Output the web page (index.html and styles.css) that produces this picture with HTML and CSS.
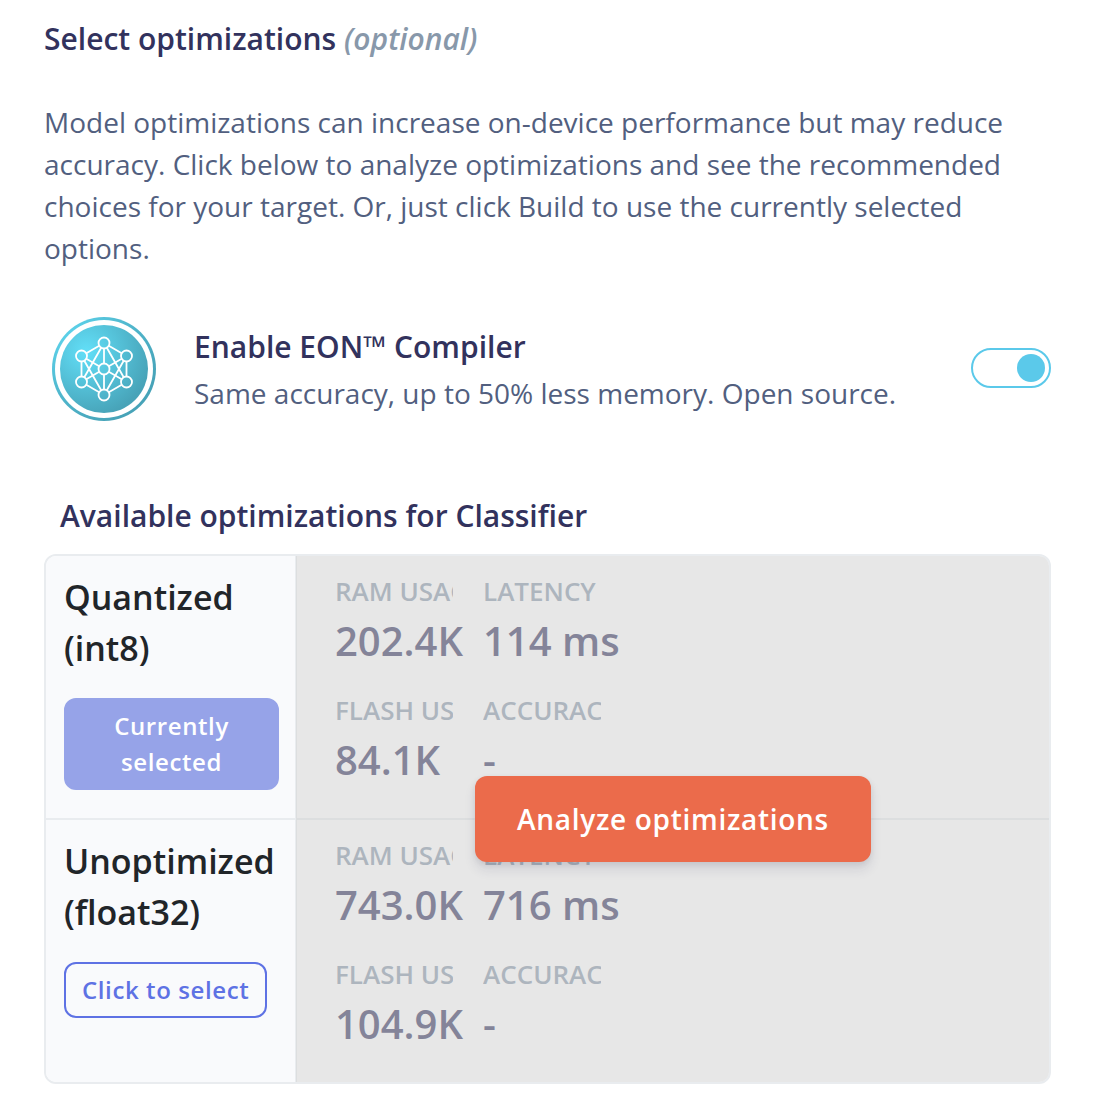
FILE: index.html
```html
<!DOCTYPE html>
<html lang="en">
<head>
<meta charset="utf-8">
<title>Select optimizations</title>
<link rel="stylesheet" href="styles.css">
</head>
<body>
<main class="page">
  <h2 class="title">Select optimizations <em class="optional">(optional)</em></h2>
  <p class="intro">Model optimizations can increase on-device performance but may reduce accuracy. Click below to analyze optimizations and see the recommended choices for your target. Or, just click Build to use the currently selected options.</p>

  <section class="compiler">
    <svg class="compiler-icon" viewBox="0 0 104 104" aria-hidden="true">
      <defs>
        <radialGradient id="disc" cx="0.3" cy="0.3" r="0.75">
          <stop offset="0" stop-color="#62dff8"/>
          <stop offset="1" stop-color="#47a3b8"/>
        </radialGradient>
      </defs>
      <circle cx="52" cy="52" r="52" fill="url(#disc)"/>
      <circle cx="52" cy="52" r="49" fill="#fff"/>
      <circle cx="52" cy="52" r="44" fill="url(#disc)"/>
      <g fill="none" stroke="#fff" stroke-width="1.8">
        <path d="M47.2 28.7 34.3 36.2M56.8 28.7 69.7 36.2M47.2 75.3 34.3 67.8M56.8 75.3 69.7 67.8M29.5 44.5v15M74.5 44.5v15"/>
        <path d="M52 31.5v15M52 57.500v15M34.300 41.700 47.200 49.200M56.800 54.800 69.700 62.300M69.700 41.700 56.800 49.200M47.200 54.800 34.300 62.300"/>
        <path d="M49.200 30.800 32.300 60.200M54.800 30.800 71.700 60.200M49.200 73.200 32.300 43.800M54.800 73.200 71.700 43.800"/>
        <circle cx="52" cy="26" r="5.500"/>
        <circle cx="29.500" cy="39" r="5.500"/>
        <circle cx="74.500" cy="39" r="5.500"/>
        <circle cx="52" cy="52" r="5.500"/>
        <circle cx="29.500" cy="65" r="5.500"/>
        <circle cx="74.500" cy="65" r="5.500"/>
        <circle cx="52" cy="78" r="5.500"/>
      </g>
    </svg>
    <div class="compiler-text">
      <h3 class="compiler-name">Enable EON™ Compiler</h3>
      <p class="compiler-desc">Same accuracy, up to 50% less memory. Open source.</p>
    </div>
    <span class="toggle" role="switch" aria-checked="true"><span class="knob"></span></span>
  </section>

  <h3 class="table-title">Available optimizations for Classifier</h3>
  <section class="table">
    <div class="row">
      <div class="variant">
        <h4 class="variant-name">Quantized (int8)</h4>
        <button class="btn btn-selected">Currently selected</button>
      </div>
      <div class="metrics">
        <div class="metric"><div class="label">RAM USAGE</div><div class="value">202.4K</div></div>
        <div class="metric"><div class="label">LATENCY</div><div class="value">114 ms</div></div>
        <div class="metric"><div class="label">FLASH USAGE</div><div class="value">84.1K</div></div>
        <div class="metric"><div class="label">ACCURACY</div><div class="value">-</div></div>
      </div>
    </div>
    <div class="row">
      <div class="variant">
        <h4 class="variant-name">Unoptimized (float32)</h4>
        <button class="btn btn-outline">Click to select</button>
      </div>
      <div class="metrics">
        <div class="metric"><div class="label">RAM USAGE</div><div class="value">743.0K</div></div>
        <div class="metric"><div class="label">LATENCY</div><div class="value">716 ms</div></div>
        <div class="metric"><div class="label">FLASH USAGE</div><div class="value">104.9K</div></div>
        <div class="metric"><div class="label">ACCURACY</div><div class="value">-</div></div>
      </div>
    </div>
    <div class="overlay"><button class="analyze">Analyze optimizations</button></div>
  </section>
</main>
</body>
</html>
```
FILE: styles.css
```css
* { box-sizing: border-box; }

body {
  margin: 0;
  background: #fff;
  color: #525f7f;
  font-family: "Open Sans", sans-serif;
  font-size: 28px;
  line-height: 42px;
}

h2, h3, h4, p { margin: 0; }

.page { padding: 17px 43px 22px 44px; }

.title, .compiler-name, .table-title {
  color: #32325d;
  font-size: 30px;
  font-weight: 600;
  line-height: 44px;
}

.optional { color: #8898aa; }

.intro { margin-top: 40px; }

.compiler {
  display: flex;
  align-items: center;
  margin-top: 48px;
  padding-left: 8px;
  height: 104px;
}

.compiler-icon { width: 104px; height: 104px; flex: none; }

.compiler-text { flex: 1; padding: 2px 0 0 38px; }

.compiler-name { line-height: 45px; }

.compiler-desc { line-height: 48px; }

.toggle {
  display: flex;
  align-items: center;
  justify-content: flex-end;
  width: 80px;
  height: 40px;
  margin-bottom: 2px;
  padding-right: 4px;
  border: 2px solid #5bc9ea;
  border-radius: 20px;
}

.knob {
  width: 28px;
  height: 28px;
  border-radius: 50%;
  background: #5bc9ea;
}

.table-title { margin: 73px 0 16px 16px; }

.table {
  position: relative;
  height: 530px;
  border: 2px solid #e9ecef;
  border-radius: 12px;
  overflow: hidden;
}

.row {
  display: grid;
  grid-template-columns: 251px 1fr;
  height: 264px;
  border-bottom: 2px solid #e9ecef;
}

.row:last-of-type { border-bottom: 0; }

.variant {
  padding: 16px 16px 0 18px;
  border-right: 2px solid #e9ecef;
  background: #f9fafc;
}

.variant-name {
  color: #212529;
  font-size: 34px;
  font-weight: 600;
  line-height: 51px;
}

.btn {
  margin-top: 24px;
  padding: 8px 16px;
  border: 2px solid #5e72e4;
  border-radius: 12px;
  font: 600 24px/36px "Open Sans", sans-serif;
  letter-spacing: 0.6px;
}

.btn-selected {
  width: 215px;
  border-color: #96a3e8;
  background: #96a3e8;
  color: #fff;
}

.btn-outline { background: transparent; color: #5e72e4; white-space: nowrap; }

.metrics {
  display: grid;
  grid-template-columns: 148px 148px;
  grid-template-rows: 119px 119px;
  padding: 16px 0 0 38px;
}

.label {
  width: 118px;
  overflow: hidden;
  color: #8898aa;
  font-size: 26px;
  font-weight: 600;
  line-height: 39px;
  white-space: nowrap;
}

.value {
  color: #32325d;
  font-size: 40px;
  font-weight: 600;
  line-height: 60px;
  white-space: nowrap;
}

/* Dims the metrics until the analysis has been run */
.overlay {
  position: absolute;
  inset: 0 0 0 250px;
  display: flex;
  align-items: center;
  justify-content: center;
  padding-left: 1px;
  background: rgba(209, 209, 209, 0.517);
}

.analyze {
  width: 396px;
  height: 86px;
  padding: 0;
  border: 0;
  border-radius: 12px;
  background: #eb6b4b;
  box-shadow: 0 8px 12px rgba(50, 50, 93, 0.11), 0 2px 6px rgba(0, 0, 0, 0.08);
  color: #fff;
  font: 600 28px/42px "Open Sans", sans-serif;
  letter-spacing: 0.7px;
}
```
